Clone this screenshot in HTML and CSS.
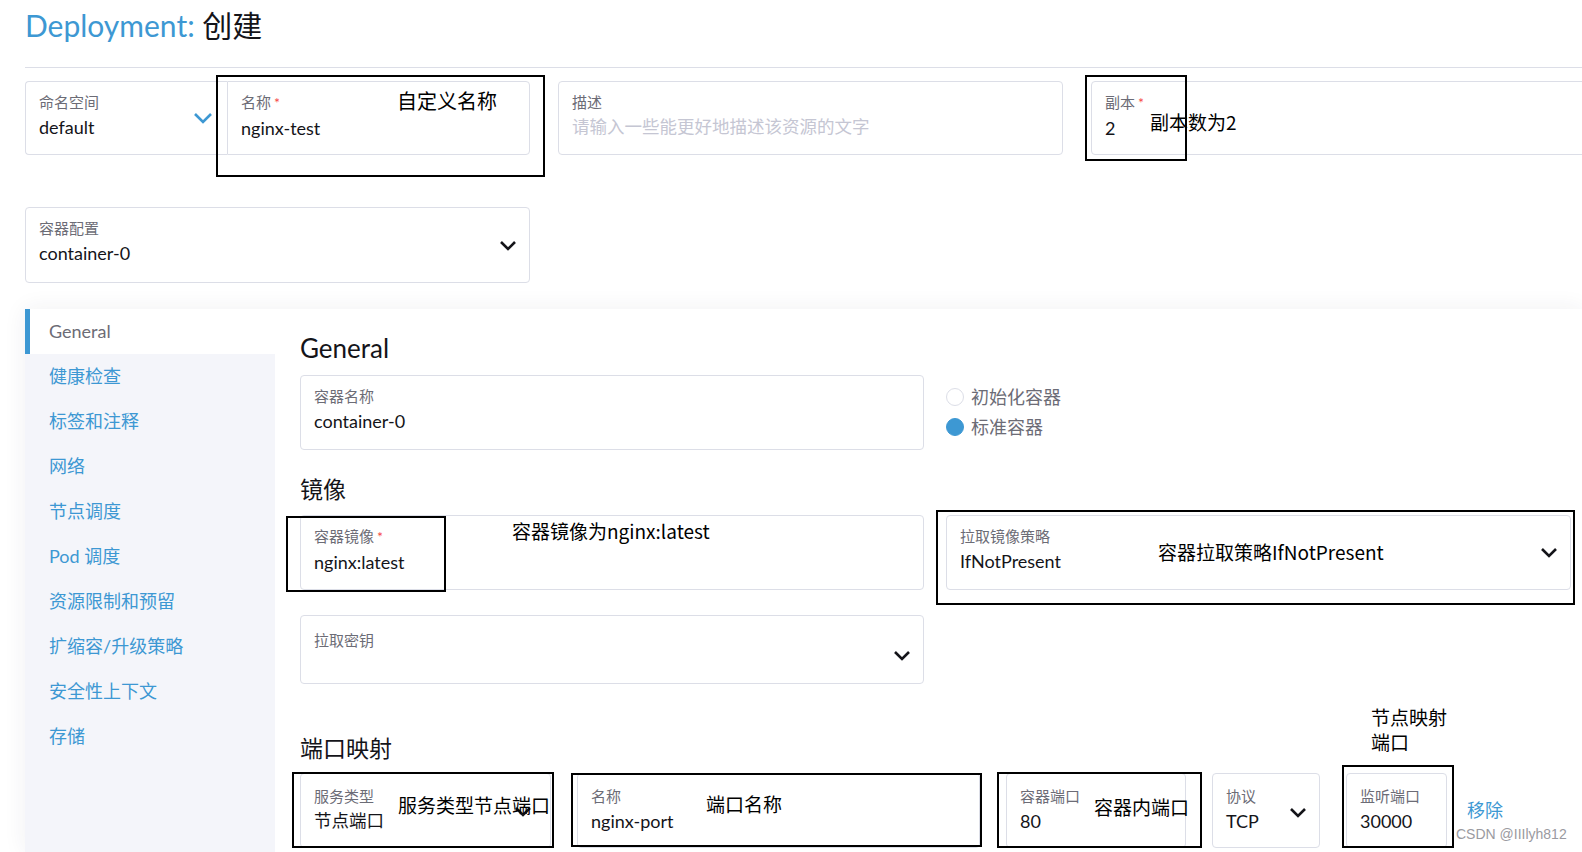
FILE: index.html
```html
<!DOCTYPE html>
<html lang="zh-CN">
<head>
<meta charset="utf-8">
<title>Deployment: 创建</title>
<link rel="stylesheet" href="styles.css">
</head>
<body>
<div class="page">
  <h1 class="title"><span class="kind">Deployment:</span> <span class="verb">创建</span></h1>
  <div class="rule"></div>

  <div class="top-grid">
    <div class="ns-group">
      <div class="field ns">
        <div class="lbl">命名空间</div>
        <div class="val">default</div>
        <svg class="chev chev-blue" width="20" height="12" viewBox="0 0 20 12"><polyline points="2,2 10,10 18,2" fill="none" stroke="currentColor" stroke-width="2.6"/></svg>
      </div>
      <div class="field name">
        <div class="lbl">名称<span class="req">*</span></div>
        <div class="val">nginx-test</div>
      </div>
    </div>
    <div class="field desc">
      <div class="lbl">描述</div>
      <div class="val placeholder">请输入一些能更好地描述该资源的文字</div>
    </div>
    <div class="field replicas">
      <div class="lbl">副本<span class="req">*</span></div>
      <div class="val">2</div>
    </div>
  </div>

  <div class="field container-select">
    <div class="lbl">容器配置</div>
    <div class="val">container-0</div>
    <svg class="chev" width="18" height="11" viewBox="0 0 18 11"><polyline points="2,2 9,9 16,2" fill="none" stroke="currentColor" stroke-width="2.6"/></svg>
  </div>

  <div class="panel">
    <nav class="side">
      <div class="side-item active">General</div>
      <div class="side-item">健康检查</div>
      <div class="side-item">标签和注释</div>
      <div class="side-item">网络</div>
      <div class="side-item">节点调度</div>
      <div class="side-item">Pod 调度</div>
      <div class="side-item">资源限制和预留</div>
      <div class="side-item">扩缩容/升级策略</div>
      <div class="side-item">安全性上下文</div>
      <div class="side-item">存储</div>
    </nav>
    <section class="content">
      <h2 class="sec-title">General</h2>
      <div class="two-col">
        <div class="field">
          <div class="lbl">容器名称</div>
          <div class="val">container-0</div>
        </div>
        <div class="radios">
          <div class="radio"><span class="dot"></span><span class="rlabel">初始化容器</span></div>
          <div class="radio checked"><span class="dot"></span><span class="rlabel">标准容器</span></div>
        </div>
      </div>

      <h2 class="sec-title cjk-title">镜像</h2>
      <div class="two-col">
        <div class="field">
          <div class="lbl">容器镜像<span class="req">*</span></div>
          <div class="val">nginx:latest</div>
        </div>
        <div class="field">
          <div class="lbl">拉取镜像策略</div>
          <div class="val">IfNotPresent</div>
          <svg class="chev" width="18" height="11" viewBox="0 0 18 11"><polyline points="2,2 9,9 16,2" fill="none" stroke="currentColor" stroke-width="2.6"/></svg>
        </div>
      </div>
      <div class="two-col secret-row">
        <div class="field secret">
          <div class="lbl">拉取密钥</div>
          <svg class="chev" width="18" height="11" viewBox="0 0 18 11"><polyline points="2,2 9,9 16,2" fill="none" stroke="currentColor" stroke-width="2.6"/></svg>
        </div>
      </div>

      <h2 class="sec-title cjk-title ports-title">端口映射</h2>
      <div class="port-row">
        <div class="field p-type">
          <div class="lbl">服务类型</div>
          <div class="val cjk-val">节点端口</div>
          <svg class="chev" width="18" height="11" viewBox="0 0 18 11"><polyline points="2,2 9,9 16,2" fill="none" stroke="currentColor" stroke-width="2.6"/></svg>
        </div>
        <div class="field p-name">
          <div class="lbl">名称</div>
          <div class="val">nginx-port</div>
        </div>
        <div class="field p-port">
          <div class="lbl">容器端口</div>
          <div class="val">80</div>
        </div>
        <div class="field p-proto">
          <div class="lbl">协议</div>
          <div class="val">TCP</div>
          <svg class="chev" width="18" height="11" viewBox="0 0 18 11"><polyline points="2,2 9,9 16,2" fill="none" stroke="currentColor" stroke-width="2.6"/></svg>
        </div>
        <div class="field p-listen">
          <div class="lbl">监听端口</div>
          <div class="val">30000</div>
        </div>
        <a class="remove">移除</a>
      </div>
    </section>
  </div>

  <!-- annotations drawn over the screenshot -->
  <div class="anno-box a1"></div>
  <div class="anno-box a2"></div>
  <div class="anno-box a3"></div>
  <div class="anno-box a4"></div>
  <div class="anno-box a5"></div>
  <div class="anno-box a6"></div>
  <div class="anno-box a7"></div>
  <div class="anno-box a8"></div>
  <div class="anno t1">自定义名称</div>
  <div class="anno t2">副本数为2</div>
  <div class="anno t3">容器镜像为nginx:latest</div>
  <div class="anno t4">容器拉取策略IfNotPresent</div>
  <div class="anno t5">服务类型节点端口</div>
  <div class="anno t6">端口名称</div>
  <div class="anno t7">容器内端口</div>
  <div class="anno t8">节点映射<br>端口</div>
  <div class="watermark">CSDN @IIIlyh812</div>
</div>
</body>
</html>
```

FILE: styles.css
```css
html, body {
  margin: 0;
  padding: 0;
  background: #fff;
  overflow: hidden;
}
body {
  font-family: Lato, "Noto Sans CJK SC", sans-serif;
  color: #141419;
  width: 1582px;
  height: 852px;
}
.page {
  position: relative;
  height: 852px;
  padding-left: 25px;
  overflow: hidden;
}
.title {
  margin: 0;
  padding-top: 7px;
  font-size: 30px;
  line-height: 36px;
  font-weight: 400;
}
.title .kind { color: #3d98d3; }
.title .verb { color: #141419; }
.rule {
  margin-top: 24px;
  height: 1px;
  background: #dcdee7;
}

.field {
  position: relative;
  box-sizing: border-box;
  height: 74px;
  border: 1px solid #dcdee7;
  border-radius: 4px;
  padding: 10px 12px 10px 13px;
  background: #fff;
}
.lbl {
  font-size: 15px;
  line-height: 20px;
  color: #6c6c76;
}
.req {
  color: #f64747;
  margin-left: 3px;
  font-size: 14px;
}
.val {
  font-size: 18px;
  line-height: 30px;
  color: #141419;
}
.cjk-val { font-size: 17.5px; }
.placeholder { color: #c5c6d3; font-size: 17.5px; }
.chev {
  position: absolute;
  right: 12px;
  top: 31px;
  color: #141419;
}
.chev-blue { color: #3d98d3; right: 14px; top: 30px; }

.top-grid {
  margin-top: 13px;
  display: grid;
  grid-template-columns: 505px 505px 505px;
  column-gap: 28px;
}
.ns-group {
  display: flex;
}
.ns-group .ns {
  width: 202px;
  border-radius: 4px 0 0 4px;
  border-right: none;
}
.ns-group .name {
  flex: 1;
  border-radius: 0 4px 4px 0;
}

.container-select {
  margin-top: 52px;
  width: 505px;
  height: 76px;
}
.container-select .chev { top: 32px; right: 12px; }

.panel {
  margin-top: 26px;
  display: flex;
  height: 543px;
  box-shadow: 0 0 22px rgba(40, 45, 70, 0.07);
  background: #fff;
}
.side {
  width: 250px;
  background: #f4f5fa;
  flex-shrink: 0;
}
.side-item {
  height: 45px;
  line-height: 45px;
  padding-left: 24px;
  font-size: 18px;
  color: #3d98d3;
}
.side-item.active {
  background: #fff;
  color: #6c6c76;
  border-left: 5px solid #3d98d3;
  padding-left: 19px;
}
.content {
  padding: 23px 0 0 25px;
  width: 1300px;
}
.sec-title {
  margin: 0;
  font-size: 26px;
  line-height: 32px;
  font-weight: 400;
  color: #141419;
}
.cjk-title { font-size: 23px; margin-top: 23px; }
.two-col {
  margin-top: 11px;
  display: grid;
  grid-template-columns: 624px 625px;
  column-gap: 22px;
}
.two-col .field { height: 75px; }
.cjk-title + .two-col { margin-top: 10px; }
.secret-row { margin-top: 25px; }
.two-col .field.secret { height: 69px; padding-top: 14px; }
.secret .chev { top: 34px; }

.radios {
  padding-top: 7px;
}
.radio {
  display: flex;
  align-items: center;
  height: 30px;
  font-size: 18px;
  color: #6c6c76;
}
.dot {
  width: 18px;
  height: 18px;
  border-radius: 50%;
  border: 1px solid #dcdee7;
  margin-right: 7px;
  box-sizing: border-box;
}
.radio.checked .dot {
  background: #3d98d3;
  border-color: #3d98d3;
}
.rlabel { line-height: 30px; }

.ports-title { margin-top: 48px; }
.port-row {
  margin-top: 9px;
  display: flex;
  column-gap: 26px;
  align-items: flex-start;
}
.port-row .field { height: 75px; padding-top: 12px; }
.p-type { width: 251px; }
.p-name { width: 403px; }
.p-port { width: 180px; }
.p-proto { width: 108px; }
.p-listen { width: 101px; }
.p-type .chev { right: 18px; top: 32px; }
.p-proto .chev { top: 33px; }
.remove {
  margin-top: 24px;
  margin-left: -6px;
  font-size: 18px;
  color: #3d98d3;
  line-height: 26px;
}

/* annotations */
.anno-box {
  position: absolute;
  border: 2px solid #000;
  box-sizing: border-box;
}
.a1 { left: 216px; top: 75px; width: 329px; height: 102px; }
.a2 { left: 1085px; top: 75px; width: 102px; height: 86px; }
.a3 { left: 286px; top: 516px; width: 160px; height: 76px; }
.a4 { left: 936px; top: 510px; width: 639px; height: 95px; }
.a5 { left: 292px; top: 772px; width: 262px; height: 76px; }
.a6 { left: 571px; top: 773px; width: 411px; height: 74px; }
.a7 { left: 997px; top: 772px; width: 205px; height: 76px; }
.a8 { left: 1342px; top: 765px; width: 112px; height: 83px; }

.anno {
  position: absolute;
  font-family: "Noto Sans CJK SC", sans-serif;
  font-size: 19px;
  line-height: 25px;
  color: #000;
  white-space: nowrap;
}
.t1 { left: 397px; top: 88px; font-size: 20px; }
.t2 { left: 1150px; top: 109px; }
.t3 { left: 512px; top: 518px; }
.t4 { left: 1158px; top: 539px; }
.t5 { left: 398px; top: 792px; }
.t6 { left: 706px; top: 791px; }
.t7 { left: 1094px; top: 794px; }
.t8 { left: 1371px; top: 704px; }
.watermark {
  position: absolute;
  left: 1456px;
  top: 825px;
  font-family: "Liberation Sans", Arial, sans-serif;
  font-size: 14px;
  line-height: 18px;
  color: #9a9aa0;
  background: rgba(255,255,255,0.6);
}
```
